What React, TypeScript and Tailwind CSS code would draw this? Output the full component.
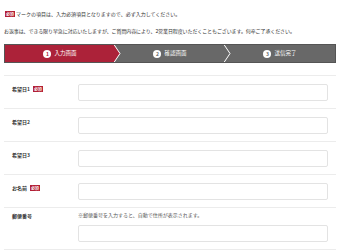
const rows = [
  { label: '希望日1', required: true },
  { label: '希望日2', required: false },
  { label: '希望日3', required: false },
  { label: 'お名前', required: true },
];

const steps = [
  { n: '1', label: '入力画面', active: true },
  { n: '2', label: '確認画面', active: false },
  { n: '3', label: '送信完了', active: false },
];

function Badge() {
  return (
    <span className="inline-flex items-center justify-center bg-[#b21f35] text-white text-[4px] leading-none w-[10px] h-[6px] font-bold">
      必須
    </span>
  );
}

export default function App() {
  return (
    <div
      className="w-[340px] h-[250px] overflow-hidden bg-white px-[4px] text-[#333]"
      style={{ fontFamily: '"Noto Sans CJK JP", "Noto Sans", sans-serif' }}
    >
      {/* notes */}
      <div className="pt-[11px] flex items-center gap-[1px] text-[5px] leading-[6px] pl-[1px]">
        <Badge />
        <span>マークの項目は、入力必須項目となりますので、必ず入力してください。</span>
      </div>
      <p className="mt-[11px] text-[5px] leading-[6px] tracking-[-0.1px]">
        お返事は、できる限り早急に対応いたしますが、ご質問内容により、2営業日程度いただくこともございます。何卒ご了承ください。
      </p>

      {/* steps */}
      <div className="mt-[10px] h-[19px] flex border border-[#555] bg-[#686868]">
        {steps.map((s, i) => (
          <div
            key={s.n}
            className={
              'relative flex-1 flex items-center justify-center gap-[3px] ' +
              (s.active ? 'bg-[#ac2239]' : 'bg-[#686868]')
            }
          >
            <span
              className={
                'w-[8px] h-[8px] rounded-full bg-white flex items-center justify-center text-[5px] leading-none font-bold ' +
                (s.active ? 'text-[#ac2239]' : 'text-[#686868]')
              }
            >
              {s.n}
            </span>
            <span className="text-white text-[5.5px] leading-none">{s.label}</span>
            {i < 2 && (
              <svg
                className="absolute right-[-6px] top-0 h-full w-[7px] z-10"
                viewBox="0 0 7 17"
                preserveAspectRatio="none"
              >
                <polygon points="0,0 6,8.5 0,17" fill={s.active ? '#ac2239' : '#686868'} />
                <polyline points="0.3,0 6,8.5 0.3,17" fill="none" stroke="#fff" strokeWidth="1" />
              </svg>
            )}
          </div>
        ))}
      </div>

      {/* form */}
      <div className="mt-[12px] border-t border-[#ececec]">
        {rows.map((r) => (
          <div key={r.label} className="flex items-start pt-[8px] pb-[7px] border-b border-[#ececec]">
            <div className="w-[74px] pl-[8px] pt-[2px] flex items-center gap-[3px]">
              <span className="text-[5px] leading-[6px] font-bold">{r.label}</span>
              {r.required && <Badge />}
            </div>
            <div className="w-[250px] h-[17px] border border-[#e3e3e3] rounded-[2px] bg-white" />
          </div>
        ))}
        <div className="grid grid-cols-[74px_250px] items-start pt-[4px] pb-[7px] border-b border-[#ececec]">
          <div className="pl-[8px] pt-[1px] text-[5px] leading-[6px] font-bold self-start">郵便番号</div>
          <div className="flex flex-col">
            <div className="text-[5px] leading-[6px] text-[#555] h-[13px]">
              ※郵便番号を入力すると、自動で住所が表示されます。
            </div>
            <div className="w-[250px] h-[17px] border border-[#e3e3e3] rounded-[2px] bg-white" />
          </div>
        </div>
      </div>
    </div>
  );
}
